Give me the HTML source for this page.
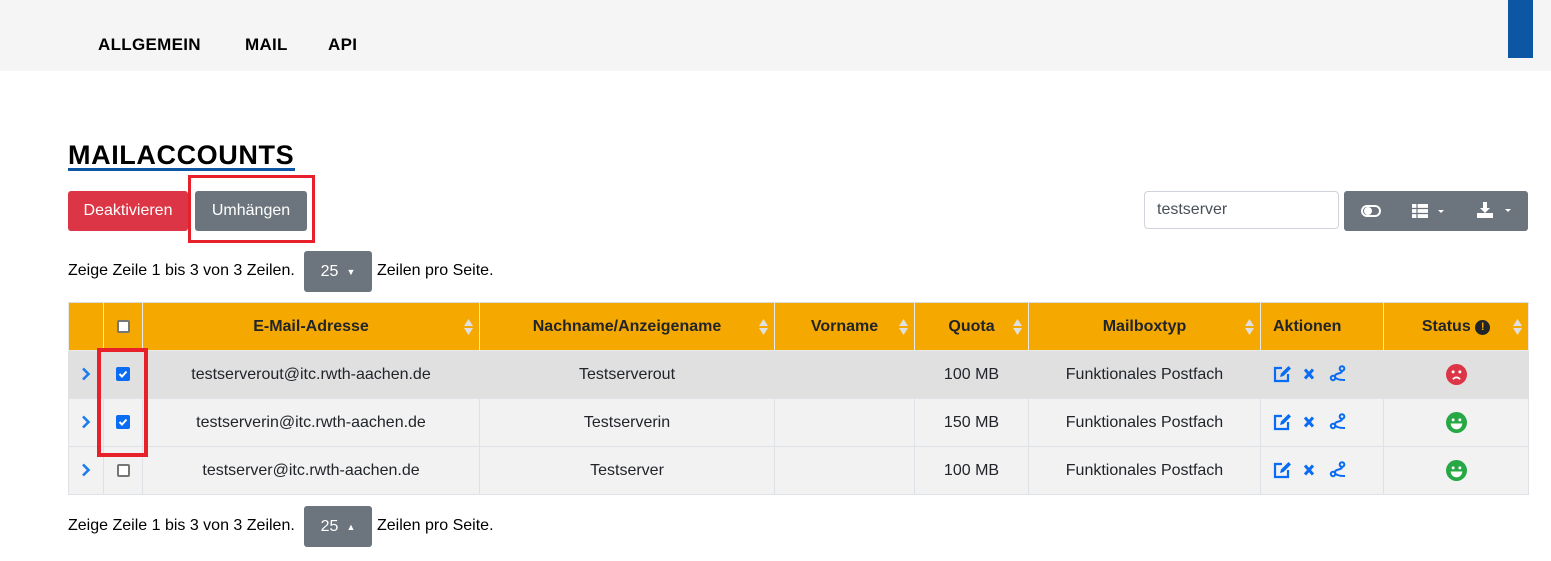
<!DOCTYPE html>
<html><head><meta charset="utf-8"><style>
*{box-sizing:border-box;margin:0;padding:0}
body{width:1551px;height:561px;background:#fff;font-family:"Liberation Sans",Arial,sans-serif;color:#212529;position:relative;overflow:hidden}
.abs{position:absolute}
.nav{left:0;top:0;width:1551px;height:71px;background:#f5f5f5}
.nav span{position:absolute;top:35px;font-size:17px;font-weight:bold;color:#000;letter-spacing:0.3px}
.btn{position:absolute;color:#fff;font-size:16px;display:flex;align-items:center;justify-content:center;border-radius:3px}
.gray{background:#6c757d}
table{position:absolute;left:68px;top:302px;border-collapse:collapse;font-size:16px}
th{background:#f5a800;height:48px;font-weight:bold;border:1px solid #e9e9e9;border-top:1px solid #ddd;position:relative;text-align:center}
td{height:48px;text-align:center;border:1px solid #dee2e6;background:#f2f2f2}
tr.h td{background:#e0e0e0;border-left-color:#e0e0e0;border-right-color:#e0e0e0}
.sort{position:absolute;right:6px;top:16px;width:9px;height:16px}
.cb{display:inline-block;width:13px;height:13px;border:2px solid #767676;border-radius:2px;background:#fff;vertical-align:middle}
.cbc{display:inline-block;width:14px;height:14px;border-radius:2px;background:#0a6cf2;vertical-align:middle;position:relative}
</style></head><body>
<div class="abs nav"><span style="left:98px">ALLGEMEIN</span><span style="left:245px">MAIL</span><span style="left:328px">API</span></div>
<div class="abs" style="left:1508px;top:0;width:25px;height:58px;background:#0d56a4"></div>
<div class="abs" style="left:68px;top:140px;font-size:27px;font-weight:bold;color:#000;letter-spacing:0.6px">MAILACCOUNTS</div>
<div class="abs" style="left:68px;top:168px;width:227px;height:3px;background:#0d56a4"></div>
<div class="btn" style="left:68px;top:191px;width:120px;height:40px;background:#dc3545">Deaktivieren</div>
<div class="btn gray" style="left:195px;top:191px;width:112px;height:40px">Umhängen</div>
<div class="abs" style="left:188px;top:175px;width:127px;height:68px;border:3px solid #e8202a"></div>
<div class="abs" style="left:1144px;top:191px;width:195px;height:38px;border:1px solid #ced4da;border-radius:4px;padding:9px 12px;font-size:16px;color:#495057">testserver</div>
<div class="btn gray" style="left:1344px;top:191px;width:184px;height:40px;justify-content:flex-start">
<svg class="abs" style="left:17px;top:14px" width="20" height="12" viewBox="0 0 20 12"><rect x="1" y="1" width="18" height="10" rx="5" fill="none" stroke="#fff" stroke-width="2"/><circle cx="7" cy="6" r="4" fill="#fff"/></svg>
<svg class="abs" style="left:68px;top:13px" width="32" height="14" viewBox="0 0 32 14"><rect x="0" y="0" width="16" height="14" fill="#fff"/><path d="M0 4.5H16M0 9.5H16M5 0V14" stroke="#6c757d" stroke-width="1.2"/><path d="M26 6l3 3 3-3z" fill="#fff"/></svg>
<svg class="abs" style="left:133px;top:11px" width="36" height="17" viewBox="0 0 36 17"><path d="M6 0h4v6h3l-5 5-5-5h3z" fill="#fff"/><rect x="0" y="11" width="16" height="5" fill="#fff"/><path d="M28 7l3 3 3-3z" fill="#fff"/></svg>
</div>
<div class="abs" style="left:68px;top:262px;font-size:16px;color:#000">Zeige Zeile 1 bis 3 von 3 Zeilen.</div>
<div class="btn gray" style="left:304px;top:251px;width:68px;height:41px">25 <span style="font-size:9px;margin-left:8px">▼</span></div>
<div class="abs" style="left:377px;top:262px;font-size:16px;color:#000">Zeilen pro Seite.</div>
<table>
<tr><th style="width:35px"></th><th style="width:39px"><span class="cb"></span></th>
<th style="width:337px">E-Mail-Adresse<svg class="sort" viewBox="0 0 9 16"><path d="M0 7l4.5-7 4.5 7zM0 9l4.5 7 4.5-7z" fill="#e0e0e0"/></svg></th>
<th style="width:295px">Nachname/Anzeigename<svg class="sort" viewBox="0 0 9 16"><path d="M0 7l4.5-7 4.5 7zM0 9l4.5 7 4.5-7z" fill="#e0e0e0"/></svg></th>
<th style="width:140px">Vorname<svg class="sort" viewBox="0 0 9 16"><path d="M0 7l4.5-7 4.5 7zM0 9l4.5 7 4.5-7z" fill="#e0e0e0"/></svg></th>
<th style="width:114px">Quota<svg class="sort" viewBox="0 0 9 16"><path d="M0 7l4.5-7 4.5 7zM0 9l4.5 7 4.5-7z" fill="#e0e0e0"/></svg></th>
<th style="width:232px">Mailboxtyp<svg class="sort" viewBox="0 0 9 16"><path d="M0 7l4.5-7 4.5 7zM0 9l4.5 7 4.5-7z" fill="#e0e0e0"/></svg></th>
<th style="width:123px;text-align:left;padding-left:12px">Aktionen</th>
<th style="width:145px">Status <span style="display:inline-block;width:15px;height:15px;border-radius:50%;background:#212529;color:#f5a800;font-size:11px;line-height:15px;vertical-align:1px">!</span><svg class="sort" viewBox="0 0 9 16"><path d="M0 7l4.5-7 4.5 7zM0 9l4.5 7 4.5-7z" fill="#e0e0e0"/></svg></th></tr>
<tr class="h"><td>CHEV</td><td><span class="cbc"><svg width="14" height="14"><path d="M3.5 7l2.5 2.5 4.5-5" stroke="#fff" stroke-width="2" fill="none"/></svg></span></td><td>testserverout@itc.rwth-aachen.de</td><td>Testserverout</td><td></td><td>100 MB</td><td>Funktionales Postfach</td><td>ICONS</td><td>SAD</td></tr>
<tr><td>CHEV</td><td><span class="cbc"><svg width="14" height="14"><path d="M3.5 7l2.5 2.5 4.5-5" stroke="#fff" stroke-width="2" fill="none"/></svg></span></td><td>testserverin@itc.rwth-aachen.de</td><td>Testserverin</td><td></td><td>150 MB</td><td>Funktionales Postfach</td><td>ICONS</td><td>HAPPY</td></tr>
<tr><td>CHEV</td><td><span class="cb"></span></td><td>testserver@itc.rwth-aachen.de</td><td>Testserver</td><td></td><td>100 MB</td><td>Funktionales Postfach</td><td>ICONS</td><td>HAPPY</td></tr>
</table>
<div class="abs" style="left:97px;top:348px;width:51px;height:109px;border:4px solid #e8202a"></div>
<div class="abs" style="left:68px;top:517px;font-size:16px;color:#000">Zeige Zeile 1 bis 3 von 3 Zeilen.</div>
<div class="btn gray" style="left:304px;top:506px;width:68px;height:41px">25 <span style="font-size:9px;margin-left:8px">▲</span></div>
<div class="abs" style="left:377px;top:517px;font-size:16px;color:#000">Zeilen pro Seite.</div>
<script>
const B='#0a6cf2';
const icons='<svg width="74" height="18" viewBox="0 0 74 18" style="vertical-align:middle;margin-left:0"><path d="M9 3H2v13h13V9" stroke="'+B+'" stroke-width="2.2" fill="none"/><path d="M7 12l1-3.5 7.5-7.5 2.5 2.5-7.5 7.5z" fill="'+B+'"/><path d="M32 4.5l8 9M40 4.5l-8 9" stroke="'+B+'" stroke-width="3"/><circle cx="60" cy="13" r="2.2" fill="none" stroke="'+B+'" stroke-width="2"/><circle cx="69" cy="3.5" r="2.3" fill="none" stroke="'+B+'" stroke-width="2"/><path d="M69 6c0 3-7 2-7 5s4 4 10 4" stroke="'+B+'" stroke-width="2" fill="none"/></svg>';
const face=(c,h)=>'<svg width="21" height="21" viewBox="0 0 20 20" style="vertical-align:middle"><circle cx="10" cy="10" r="10" fill="'+c+'"/><circle cx="6.8" cy="7.5" r="1.4" fill="#fff"/><circle cx="13.2" cy="7.5" r="1.4" fill="#fff"/>'+(h?'<path d="M4.5 11h11a5.5 5.5 0 0 1-11 0z" fill="#fff"/>':'<path d="M6.5 14.5q3.5-3.5 7 0" stroke="#fff" stroke-width="1.6" fill="none"/>')+'</svg>';
const chev='<svg width="10" height="14" viewBox="0 0 10 14" style="vertical-align:middle"><path d="M2 1.5l5.5 5.5-5.5 5.5" stroke="#1a7cf0" stroke-width="2.6" fill="none"/></svg>';
document.querySelectorAll('td').forEach(t=>{const s=t.textContent;if(s=='ICONS'){t.innerHTML=icons;t.style.textAlign='left';t.style.paddingLeft='12px';}else if(s=='SAD')t.innerHTML=face('#dc3545',0);else if(s=='HAPPY')t.innerHTML=face('#28a745',1);else if(s=='CHEV')t.innerHTML=chev;});
</script>
</body></html>
